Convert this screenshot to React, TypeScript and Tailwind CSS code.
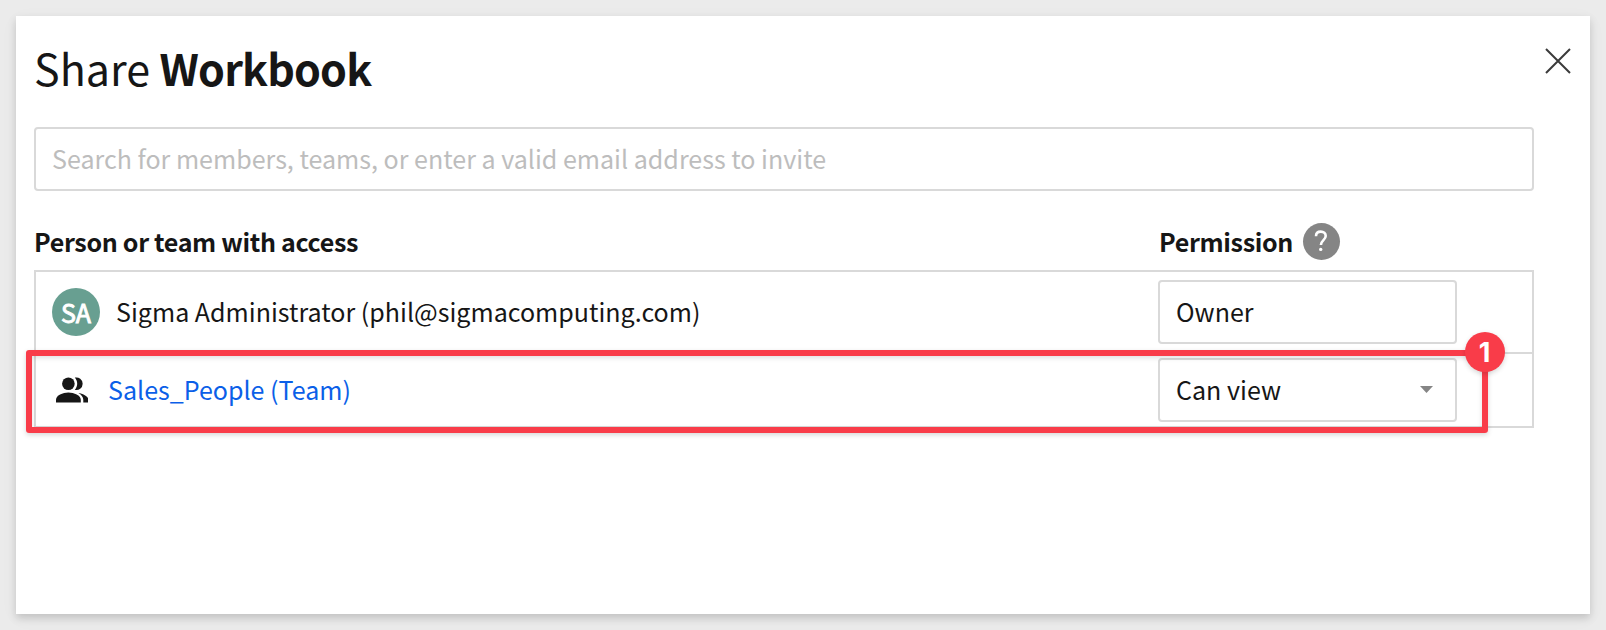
function PeopleIcon() {
  return (
    <svg width="32" height="26" viewBox="0 0 32 26" fill="#161616" aria-hidden="true">
      <circle cx="12.4" cy="6.7" r="6.3" />
      <path d="M18.8 0.6a6.3 6.3 0 1 1 0 12.2c3.2-3.8 3.2-8.4 0-12.2z" />
      <path d="M0 25.6v-2.8c0-4.6 6.8-7.4 12.4-7.4s12.4 2.8 12.4 7.4v2.8z" />
      <path d="M22.4 16c5 .7 9.9 3.4 9.9 6.8v2.8h-5v-2.8c0-2.8-2.2-5.2-4.9-6.8z" />
    </svg>
  );
}

export default function App() {
  return (
    <div className="h-[630px] w-[1606px] overflow-hidden bg-[#ebebeb] p-4 font-['Noto_Sans_CJK_SC',sans-serif] text-[25.06px] leading-[36px] text-[#161616]">
      <main className="h-[598px] w-[1574px] bg-white pl-[18px] shadow-[0_4px_8px_rgba(0,0,0,0.16),0_4px_20px_rgba(0,0,0,0.03)]">
        <header className="flex h-[111px] justify-between pr-[19px]">
          <h1 className="pt-[20px] text-[43px] leading-[62px] whitespace-nowrap">
            Share <b className="font-bold tracking-[-0.85px]">Workbook</b>
          </h1>
          <button aria-label="Close" className="mt-[32px] h-[26px] w-[26px]">
            <svg width="26" height="26" viewBox="0 0 26 26" stroke="#3b3b3b" strokeWidth="2" fill="none">
              <path d="M1 1l24 24M25 1L1 25" />
            </svg>
          </button>
        </header>
        <div className="flex h-16 w-[1500px] items-center rounded-[4px] border-2 border-[#d9d9d9] pb-0.5 pl-4 whitespace-nowrap text-[#bdbdbd]">
          Search for members, teams, or enter a valid email address to invite
        </div>
        <div className="flex h-[79px] w-[1500px] pt-[31px] font-bold tracking-[-0.34px]">
          <div className="w-[1125px] pt-px">Person or team with access</div>
          <div className="flex">
            <span className="w-[143.5px] pt-px">Permission</span>
            <span className="mt-[0.5px] flex h-[37px] w-[37px] items-center justify-center rounded-full bg-[#858585]">
              <svg width="14" height="22" viewBox="0 0 14 22" fill="none" stroke="white" strokeWidth="2.6">
                <path d="M2 6.2C2 3.2 4 1.6 6.8 1.6s4.9 1.7 4.9 4.4c0 4-4.8 4.3-4.8 9" />
                <circle cx="6.7" cy="19.4" r="1.7" fill="white" stroke="none" />
              </svg>
            </span>
          </div>
        </div>
        <div className="relative w-[1500px] border-2 border-[#d9d9d9]">
          <div className="flex h-[82px] items-center border-b-2 border-[#d9d9d9] pl-4">
            <span className="flex h-12 w-12 items-center justify-center rounded-full bg-[#689f91] text-[25px] text-white [-webkit-text-stroke:0.9px_white]">SA</span>
            <span className="w-[1058px] pb-0.5 pl-4 whitespace-nowrap">Sigma Administrator (phil@sigmacomputing.com)</span>
            <span className="flex h-16 w-[299px] items-center rounded-[4px] border-2 border-[#d9d9d9] pb-0.5 pl-4">Owner</span>
          </div>
          <div className="flex h-[72px] items-center pl-5">
            <PeopleIcon />
            <a className="w-[1070px] pb-0.5 pl-5 whitespace-nowrap text-[#0b5fe8]">Sales_People (Team)</a>
            <span className="flex h-16 w-[299px] items-center justify-between rounded-[4px] border-2 border-[#d9d9d9] pr-[22px] pb-0.5 pl-4">
              Can view
              <svg className="mt-px" width="13" height="7" viewBox="0 0 13 7" fill="#858585">
                <path d="M0 0h13L6.5 7z" />
              </svg>
            </span>
          </div>
          <div className="absolute top-[78px] -left-[10px] h-[83px] w-[1462px] rounded-[3px] border-6 border-[#f93c49] shadow-[0_2px_5px_rgba(0,0,0,0.16),inset_0_2px_5px_rgba(0,0,0,0.12)]" />
          <div className="absolute top-[60px] left-[1428.5px] flex h-10 w-10 items-center justify-center rounded-full bg-[#f93c49] pt-px font-['Inter',sans-serif] text-[27px] font-bold text-white shadow-[0_2px_5px_rgba(0,0,0,0.16)]">
            1
          </div>
        </div>
      </main>
    </div>
  );
}
